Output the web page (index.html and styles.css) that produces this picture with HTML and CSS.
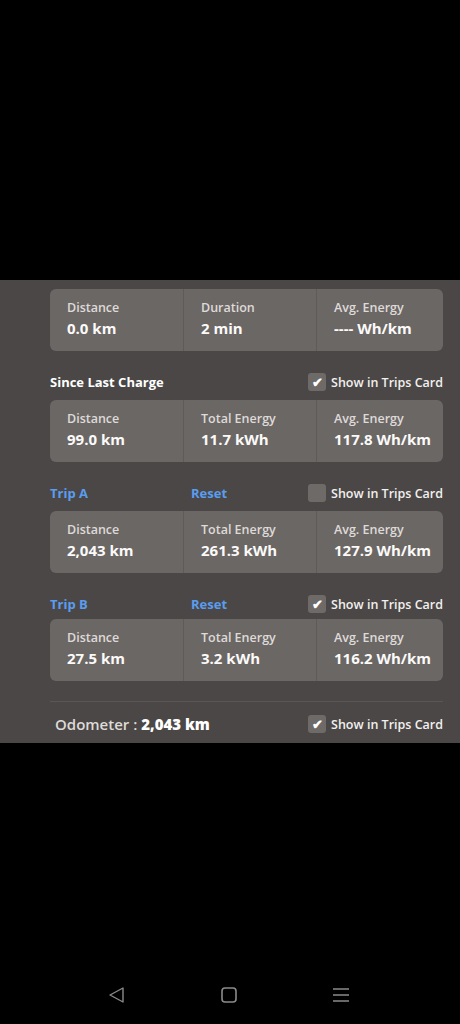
FILE: index.html
```html
<html>
    <head>
        <title>Trips</title>
        <link rel="stylesheet" href="styles.css">
    </head>
    <body>
        <div class="screen">
            <div class="card">
                <div class="cell"><div class="lbl">Distance</div><div class="val">0.0 km</div></div>
                <div class="cell"><div class="lbl">Duration</div><div class="val">2 min</div></div>
                <div class="cell"><div class="lbl">Avg. Energy</div><div class="val">---- Wh/km</div></div>
            </div>

            <div class="row">
                <span class="title">Since Last Charge</span>
                <span class="show"><span class="box on">&#10004;</span>Show in Trips Card</span>
            </div>
            <div class="card">
                <div class="cell"><div class="lbl">Distance</div><div class="val">99.0 km</div></div>
                <div class="cell"><div class="lbl">Total Energy</div><div class="val">11.7 kWh</div></div>
                <div class="cell"><div class="lbl">Avg. Energy</div><div class="val">117.8 Wh/km</div></div>
            </div>

            <div class="row">
                <span class="link trip">Trip A</span>
                <span class="link">Reset</span>
                <span class="show"><span class="box"></span>Show in Trips Card</span>
            </div>
            <div class="card">
                <div class="cell"><div class="lbl">Distance</div><div class="val">2,043 km</div></div>
                <div class="cell"><div class="lbl">Total Energy</div><div class="val">261.3 kWh</div></div>
                <div class="cell"><div class="lbl">Avg. Energy</div><div class="val">127.9 Wh/km</div></div>
            </div>

            <div class="row last">
                <span class="link trip">Trip B</span>
                <span class="link">Reset</span>
                <span class="show"><span class="box on">&#10004;</span>Show in Trips Card</span>
            </div>
            <div class="card">
                <div class="cell"><div class="lbl">Distance</div><div class="val">27.5 km</div></div>
                <div class="cell"><div class="lbl">Total Energy</div><div class="val">3.2 kWh</div></div>
                <div class="cell"><div class="lbl">Avg. Energy</div><div class="val">116.2 Wh/km</div></div>
            </div>

            <div class="odo">
                <span class="odotext">Odometer : <b>2,043 km</b></span>
                <span class="show"><span class="box on">&#10004;</span>Show in Trips Card</span>
            </div>
        </div>

        <div class="nav">
            <svg width="18" height="18" viewBox="0 0 18 18"><path d="M15 2 L15 16 L2 9 Z" fill="none" stroke="#8a8a8a" stroke-width="1.4" stroke-linejoin="round"/></svg>
            <svg width="18" height="18" viewBox="0 0 18 18"><rect x="2" y="2" width="14" height="14" rx="3" fill="none" stroke="#8a8a8a" stroke-width="1.6"/></svg>
            <svg width="18" height="18" viewBox="0 0 18 18"><path d="M1 3 H17 M1 9 H17 M1 15 H17" stroke="#8a8a8a" stroke-width="1.4"/></svg>
        </div>
    </body>
</html>
```

FILE: styles.css
```css
body{
    margin: 0;
    background: #000;
    font-family: "Open Sans", "Liberation Sans", sans-serif;
}
.screen{
    margin-top: 280px;
    height: 463px;
    box-sizing: border-box;
    padding: 9px 17px 0 50px;
    background: #4a4746;
}
.card{
    display: grid;
    grid-template-columns: 133px 133px 1fr;
    height: 62px;
    background: #6b6765;
    border-radius: 6px;
}
.cell{
    padding: 10px 0 0 17px;
}
.cell + .cell{
    border-left: 1px solid #5f5b59;
}
.lbl{
    font-size: 12.5px;
    font-weight: 600;
    color: #dedad8;
    line-height: 17px;
}
.val{
    font-size: 15px;
    font-weight: 700;
    color: #fbfaf9;
    line-height: 24px;
}
.row{
    display: flex;
    align-items: center;
    height: 20px;
    margin: 21px 0 8px;
}
.row.last{
    margin-bottom: 5px;
}
.title{
    font-size: 13px;
    font-weight: 700;
    color: #fff;
}
.link{
    font-size: 13px;
    font-weight: 700;
    color: #5a9def;
}
.trip{
    width: 141px;
}
.show{
    margin-left: auto;
    display: flex;
    align-items: center;
    font-size: 12.5px;
    font-weight: 600;
    color: #f2f0ef;
}
.box{
    width: 18px;
    height: 18px;
    margin-right: 5px;
    border-radius: 3px;
    background: #6e6a68;
    color: #fff;
    font-size: 13px;
    line-height: 18px;
    text-align: center;
}
.odo{
    display: flex;
    align-items: center;
    height: 22px;
    margin-top: 20px;
    padding-top: 11px;
    border-top: 1px solid #5a5655;
}
.odotext{
    font-size: 15px;
    font-weight: 600;
    color: #dedad8;
    padding-left: 5px;
}
.odotext b{
    color: #fff;
}
.nav{
    display: flex;
    justify-content: center;
    gap: 94px;
    margin-top: 243px;
    padding-right: 2px;
}
```
